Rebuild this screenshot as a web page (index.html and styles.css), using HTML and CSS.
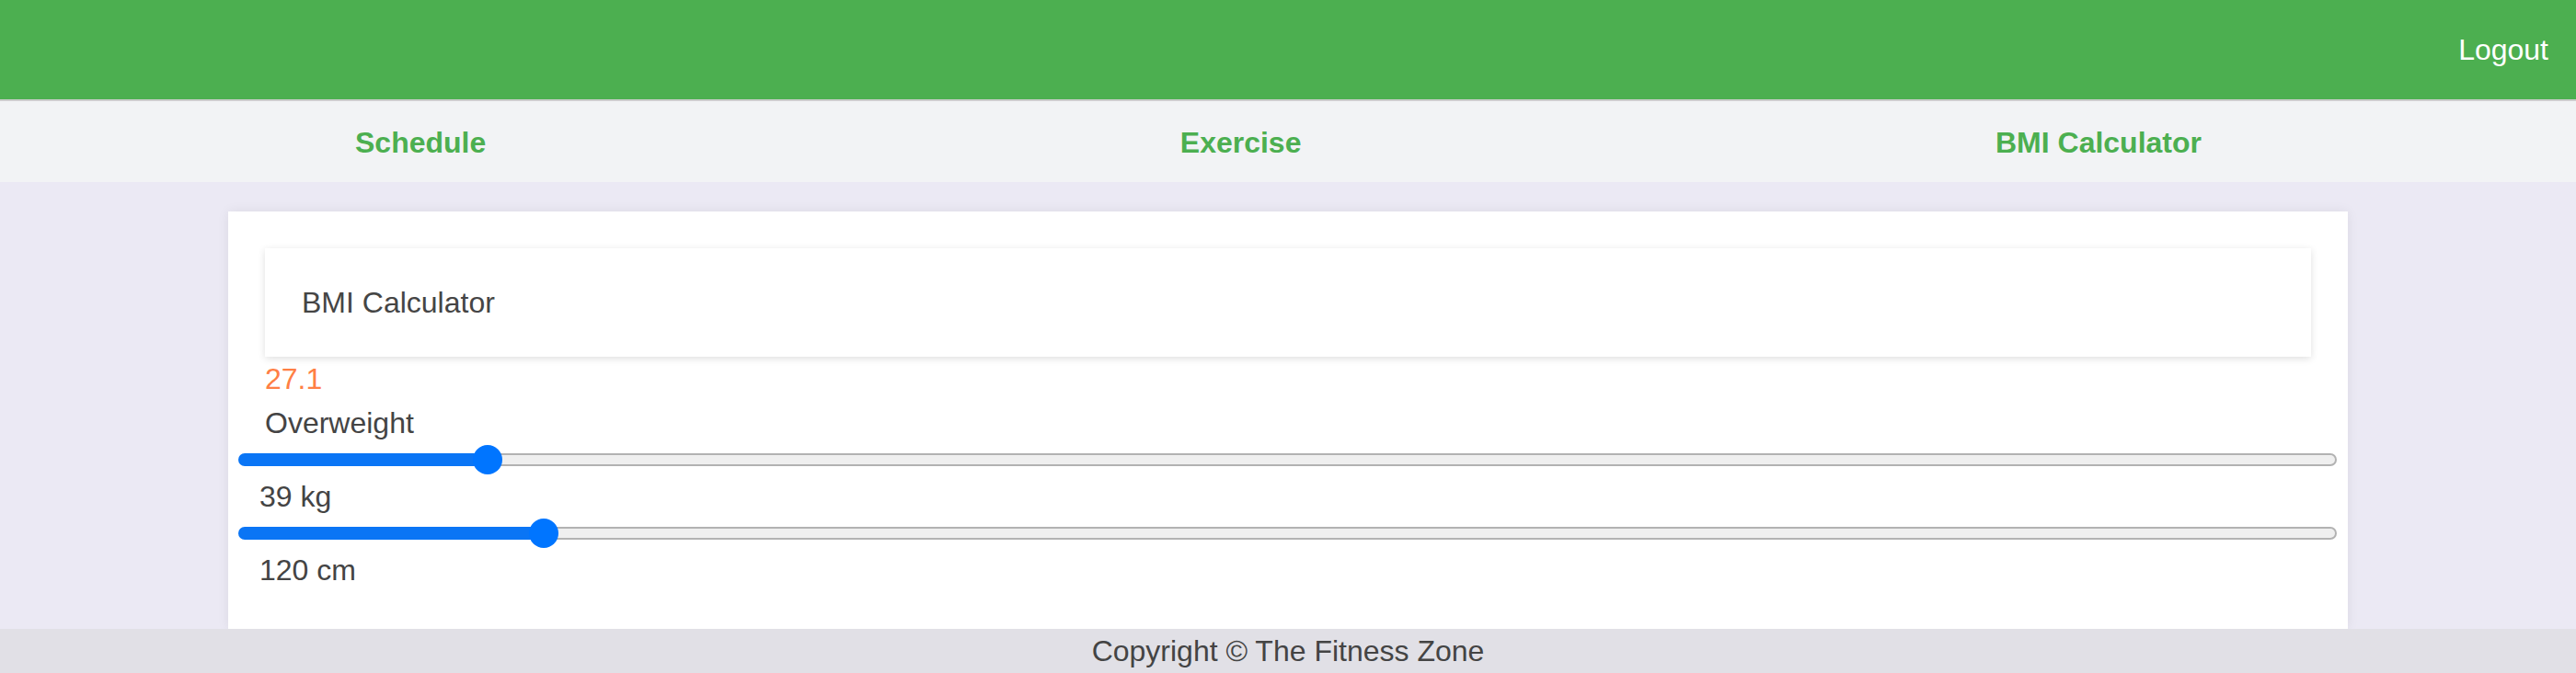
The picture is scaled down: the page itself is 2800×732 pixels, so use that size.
FILE: index.html
```html
<!DOCTYPE html>
<html lang="en">
<head>
<meta charset="utf-8">
<title>The Fitness Zone - BMI Calculator</title>
<link rel="stylesheet" href="styles.css">
</head>
<body>
<header class="topbar">
  <a class="logout" href="#">Logout</a>
</header>
<nav class="mainnav">
  <a class="navlink" href="#">Schedule</a>
  <a class="navlink" href="#">Exercise</a>
  <a class="navlink" href="#">BMI Calculator</a>
</nav>
<main class="page">
  <section class="card">
    <div class="titlebox">BMI Calculator</div>
    <div class="bmi-value">27.1</div>
    <div class="bmi-status">Overweight</div>
    <input class="slider" type="range" min="30" max="110" value="39" style="--fill: 11.92%">
    <div class="slider-label">39 kg</div>
    <input class="slider" type="range" min="100" max="243" value="120" style="--fill: 14.6%">
    <div class="slider-label">120 cm</div>
  </section>
</main>
<footer class="footer">Copyright © The Fitness Zone</footer>
</body>
</html>
```
FILE: styles.css
```css
* { box-sizing: border-box; }

html, body {
  margin: 0;
  padding: 0;
}

body {
  font-family: "Liberation Sans", Arial, Helvetica, sans-serif;
  font-size: 32px;
  color: #444444;
  background: #ebe9f4;
  width: 2800px;
}

.topbar {
  height: 110px;
  background: #4caf50;
  border-bottom: 2px solid #cdcdcd;
  display: flex;
  justify-content: flex-end;
  align-items: center;
  padding-right: 30px;
}

.logout {
  color: #ffffff;
  text-decoration: none;
  font-size: 32px;
  line-height: 38px;
}

.mainnav {
  height: 88px;
  background: #f2f3f5;
  display: flex;
  align-items: center;
  justify-content: space-between;
  padding: 0 407px 0 386px;
}

.navlink {
  color: #4caf50;
  font-weight: bold;
  text-decoration: none;
  font-size: 32px;
  line-height: 38px;
  padding-top: 2px;
}

.page {
  padding: 32px 248px 0 248px;
}

.card {
  background: #ffffff;
  padding: 40px 12px 40px 11px;
  box-shadow: 0 0 12px rgba(0, 0, 0, 0.07);
  display: flex;
  flex-direction: column;
}

.titlebox {
  margin: 0 28px 0 29px;
  padding: 40px;
  line-height: 38px;
  background: #ffffff;
  box-shadow: 0 2px 8px rgba(0, 0, 0, 0.13);
  color: #454545;
}

.bmi-value {
  padding-left: 29px;
  line-height: 48px;
  color: #ff7f45;
}

.bmi-status {
  padding-left: 29px;
  line-height: 48px;
}

.slider-label {
  padding-left: 23px;
  line-height: 48px;
}

.slider {
  -webkit-appearance: none;
  appearance: none;
  display: block;
  width: 100%;
  height: 32px;
  margin: 0;
  padding: 0;
  background: transparent;
}

.slider:focus { outline: none; }

.slider::-webkit-slider-runnable-track {
  height: 14px;
  border: 2px solid transparent;
  border-radius: 7px;
  background:
    linear-gradient(to right, #0a75f5 var(--fill), transparent var(--fill)) border-box,
    linear-gradient(#efefef, #efefef) padding-box,
    #b2b2b2;
}

.slider::-webkit-slider-thumb {
  -webkit-appearance: none;
  appearance: none;
  width: 32px;
  height: 32px;
  border-radius: 50%;
  background: #0075ff;
  border: none;
  margin-top: -11px;
}

.footer {
  height: 48px;
  line-height: 48px;
  background: #e1e0e6;
  text-align: center;
  color: #444444;
}
```
